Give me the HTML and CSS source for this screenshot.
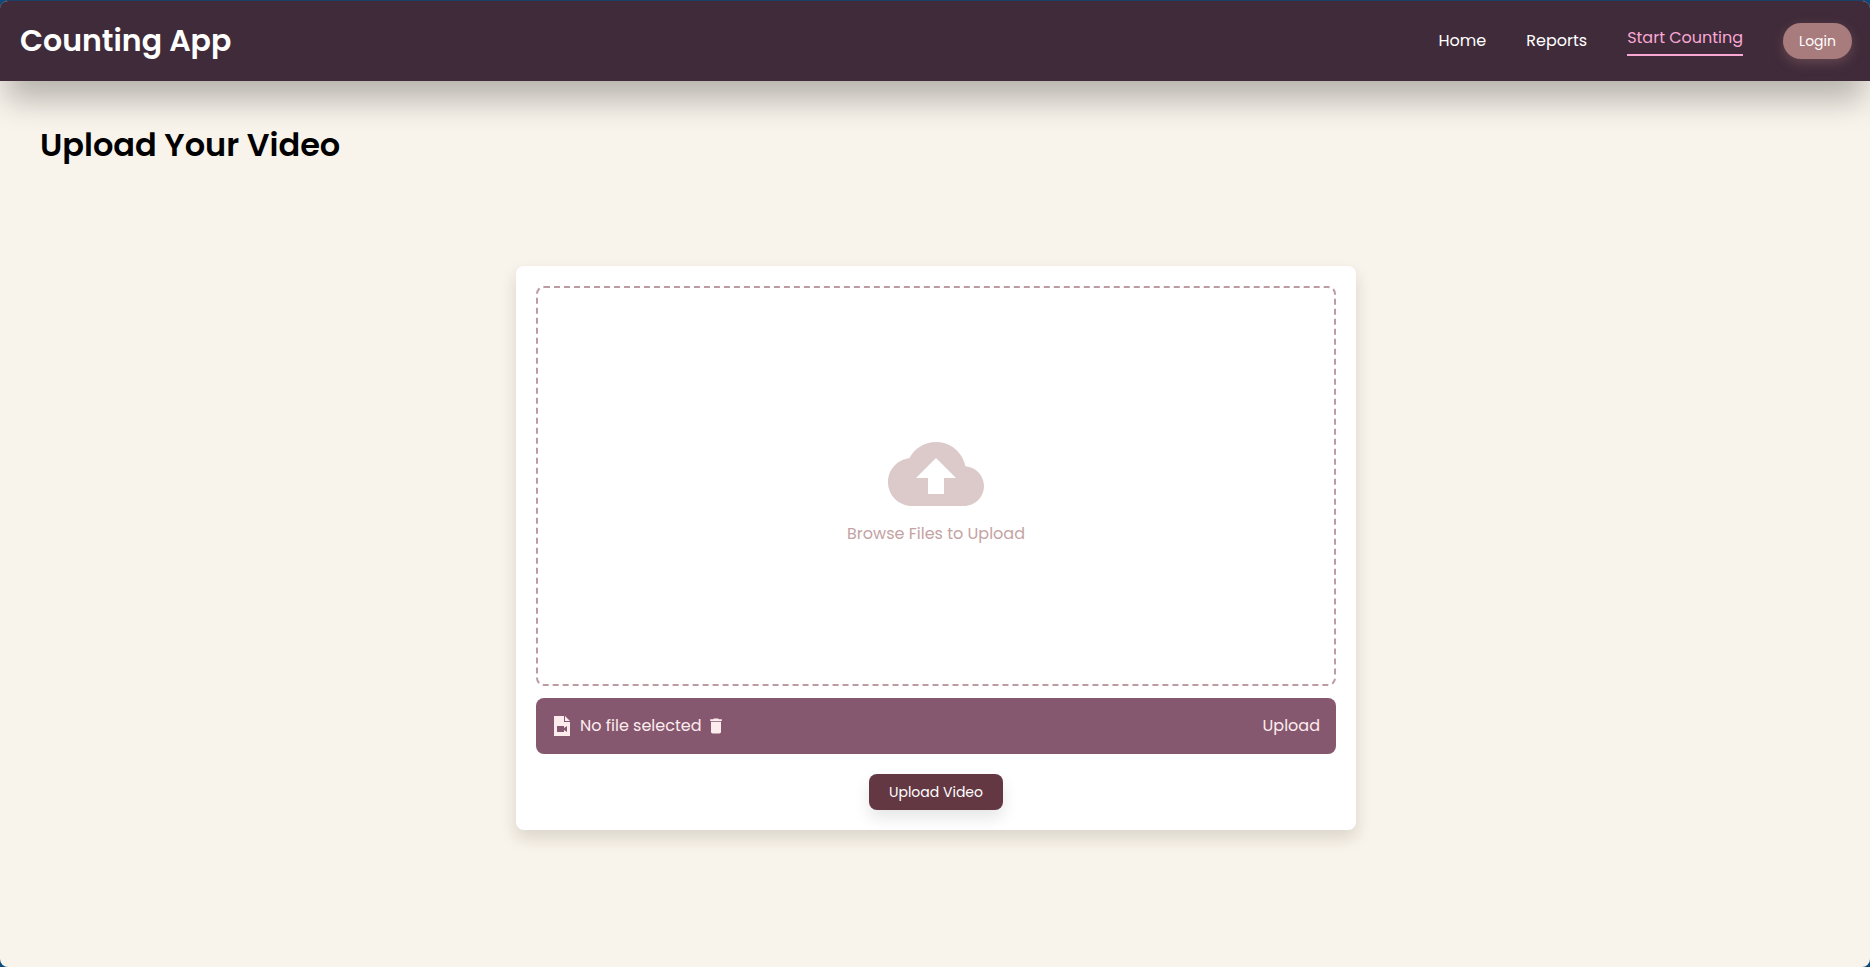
FILE: index.html
```html
<!DOCTYPE html>
<html lang="en">
<head>
<meta charset="utf-8">
<title>Counting App</title>
<link rel="stylesheet" href="styles.css">
</head>
<body>
<div class="page">
  <header class="header">
    <h1 class="brand">Counting App</h1>
    <nav class="nav">
      <a class="nav-link" href="#">Home</a>
      <a class="nav-link" href="#">Reports</a>
      <a class="nav-link nav-link-active" href="#">Start Counting</a>
      <button class="login" type="button">Login</button>
    </nav>
  </header>
  <main class="main">
    <h2 class="title">Upload Your Video</h2>
    <section class="card">
      <button class="dropzone" type="button">
        <svg class="cloud" viewBox="0 0 24 24" aria-hidden="true"><path d="M19.35 10.04C18.67 6.59 15.64 4 12 4 9.11 4 6.6 5.64 5.35 8.04 2.34 8.36 0 10.91 0 14c0 3.31 2.69 6 6 6h13c2.76 0 5-2.24 5-5 0-2.64-2.05-4.78-4.65-4.96zM14 13v4h-4v-4H7l5-5 5 5h-3z"/></svg>
        <span>Browse Files to Upload</span>
      </button>
      <div class="file-row">
        <svg class="file-icon" viewBox="0 0 24 24" aria-hidden="true"><path fill-rule="evenodd" d="M4 2h10v6h6v14H4zM7 12v6h7v-2l3 2v-6l-3 2v-2zM15 2l5 5h-5z"/></svg>
        <span class="file-name">No file selected
          <button class="delete" type="button" aria-label="Remove file"><svg class="trash" viewBox="0 0 24 24" aria-hidden="true"><path d="M6 19c0 1.1.9 2 2 2h8c1.100 0 2-.9 2-2V7H6v12zM19 4h-3.500l-1-1h-5l-1 1H5v2h14V4z"/></svg></button>
        </span>
        <span class="file-action">Upload</span>
      </div>
      <button class="submit" type="button">Upload Video</button>
    </section>
  </main>
</div>
</body>
</html>
```
FILE: styles.css
```css
* {
  box-sizing: border-box;
}

body {
  margin: 0;
  background: #0c4a7c;
  font-family: Poppins, Inter, sans-serif;
  font-size: 16px;
  line-height: 24px;
}

button {
  border: 0;
  font: inherit;
  cursor: pointer;
}

.page {
  display: flex;
  flex-direction: column;
  min-height: 100vh;
  overflow: hidden;
  border-top: 1px solid #1d406a;
  border-radius: 8px;
  background: #f8f3eb;
}

.header {
  display: flex;
  align-items: center;
  justify-content: space-between;
  height: 80px;
  padding: 0 18px 0 20px;
  background: #402b3a;
  box-shadow: 0 24px 32px -6px rgba(0, 0, 0, 0.27);
}

.brand {
  margin: 0;
  color: #fff;
  font-size: 30px;
  font-weight: 600;
  line-height: 40px;
}

.nav {
  display: flex;
  align-items: center;
  gap: 40px;
}

.nav-link {
  color: #fff;
  text-decoration: none;
}

.nav-link-active {
  padding-bottom: 4px;
  border-bottom: 2px solid #f9a8d4;
  color: #f9a8d4;
}

.login {
  height: 36px;
  padding: 0 16px;
  border-radius: 18px;
  background: #a87b7c;
  box-shadow: 0 4px 12px rgba(168, 123, 124, 0.35);
  color: #fff;
  font-size: 14px;
}

.main {
  display: flex;
  flex-direction: column;
  padding: 40px 38px 40px 40px;
}

.title {
  margin: 0 0 97px;
  color: #000;
  font-size: 32px;
  font-weight: 600;
  line-height: 48px;
}

.card {
  display: flex;
  flex-direction: column;
  align-self: center;
  width: 100%;
  max-width: 840px;
  padding: 20px;
  border-radius: 8px;
  background: #fff;
  box-shadow: 0 8px 16px rgba(60, 50, 20, 0.15);
}

.dropzone {
  display: flex;
  flex-direction: column;
  align-items: center;
  justify-content: center;
  height: 400px;
  border: 2px dashed #bd9ba3;
  border-radius: 8px;
  background: transparent;
  color: #c4a3a4;
}

.cloud {
  width: 96px;
  height: 96px;
  fill: #dccacb;
}

.file-row {
  display: flex;
  align-items: center;
  height: 56px;
  margin: 12px 0 20px;
  padding: 0 16px 0 14px;
  border-radius: 8px;
  background: #85586f;
  color: #fdecee;
}

.file-icon {
  width: 24px;
  height: 24px;
  margin-right: 6px;
  fill: currentColor;
}

.file-name {
  display: flex;
  align-items: center;
  gap: 4px;
}

.file-action {
  margin-left: auto;
}

.delete {
  display: flex;
  padding: 0;
  background: transparent;
  color: inherit;
}

.trash {
  width: 20px;
  height: 20px;
  fill: currentColor;
}

.submit {
  align-self: center;
  height: 36px;
  padding: 0 20px;
  border-radius: 8px;
  background: #643843;
  box-shadow: 0 8px 16px rgba(0, 0, 0, 0.1);
  color: #fff;
  font-size: 14px;
}
```
